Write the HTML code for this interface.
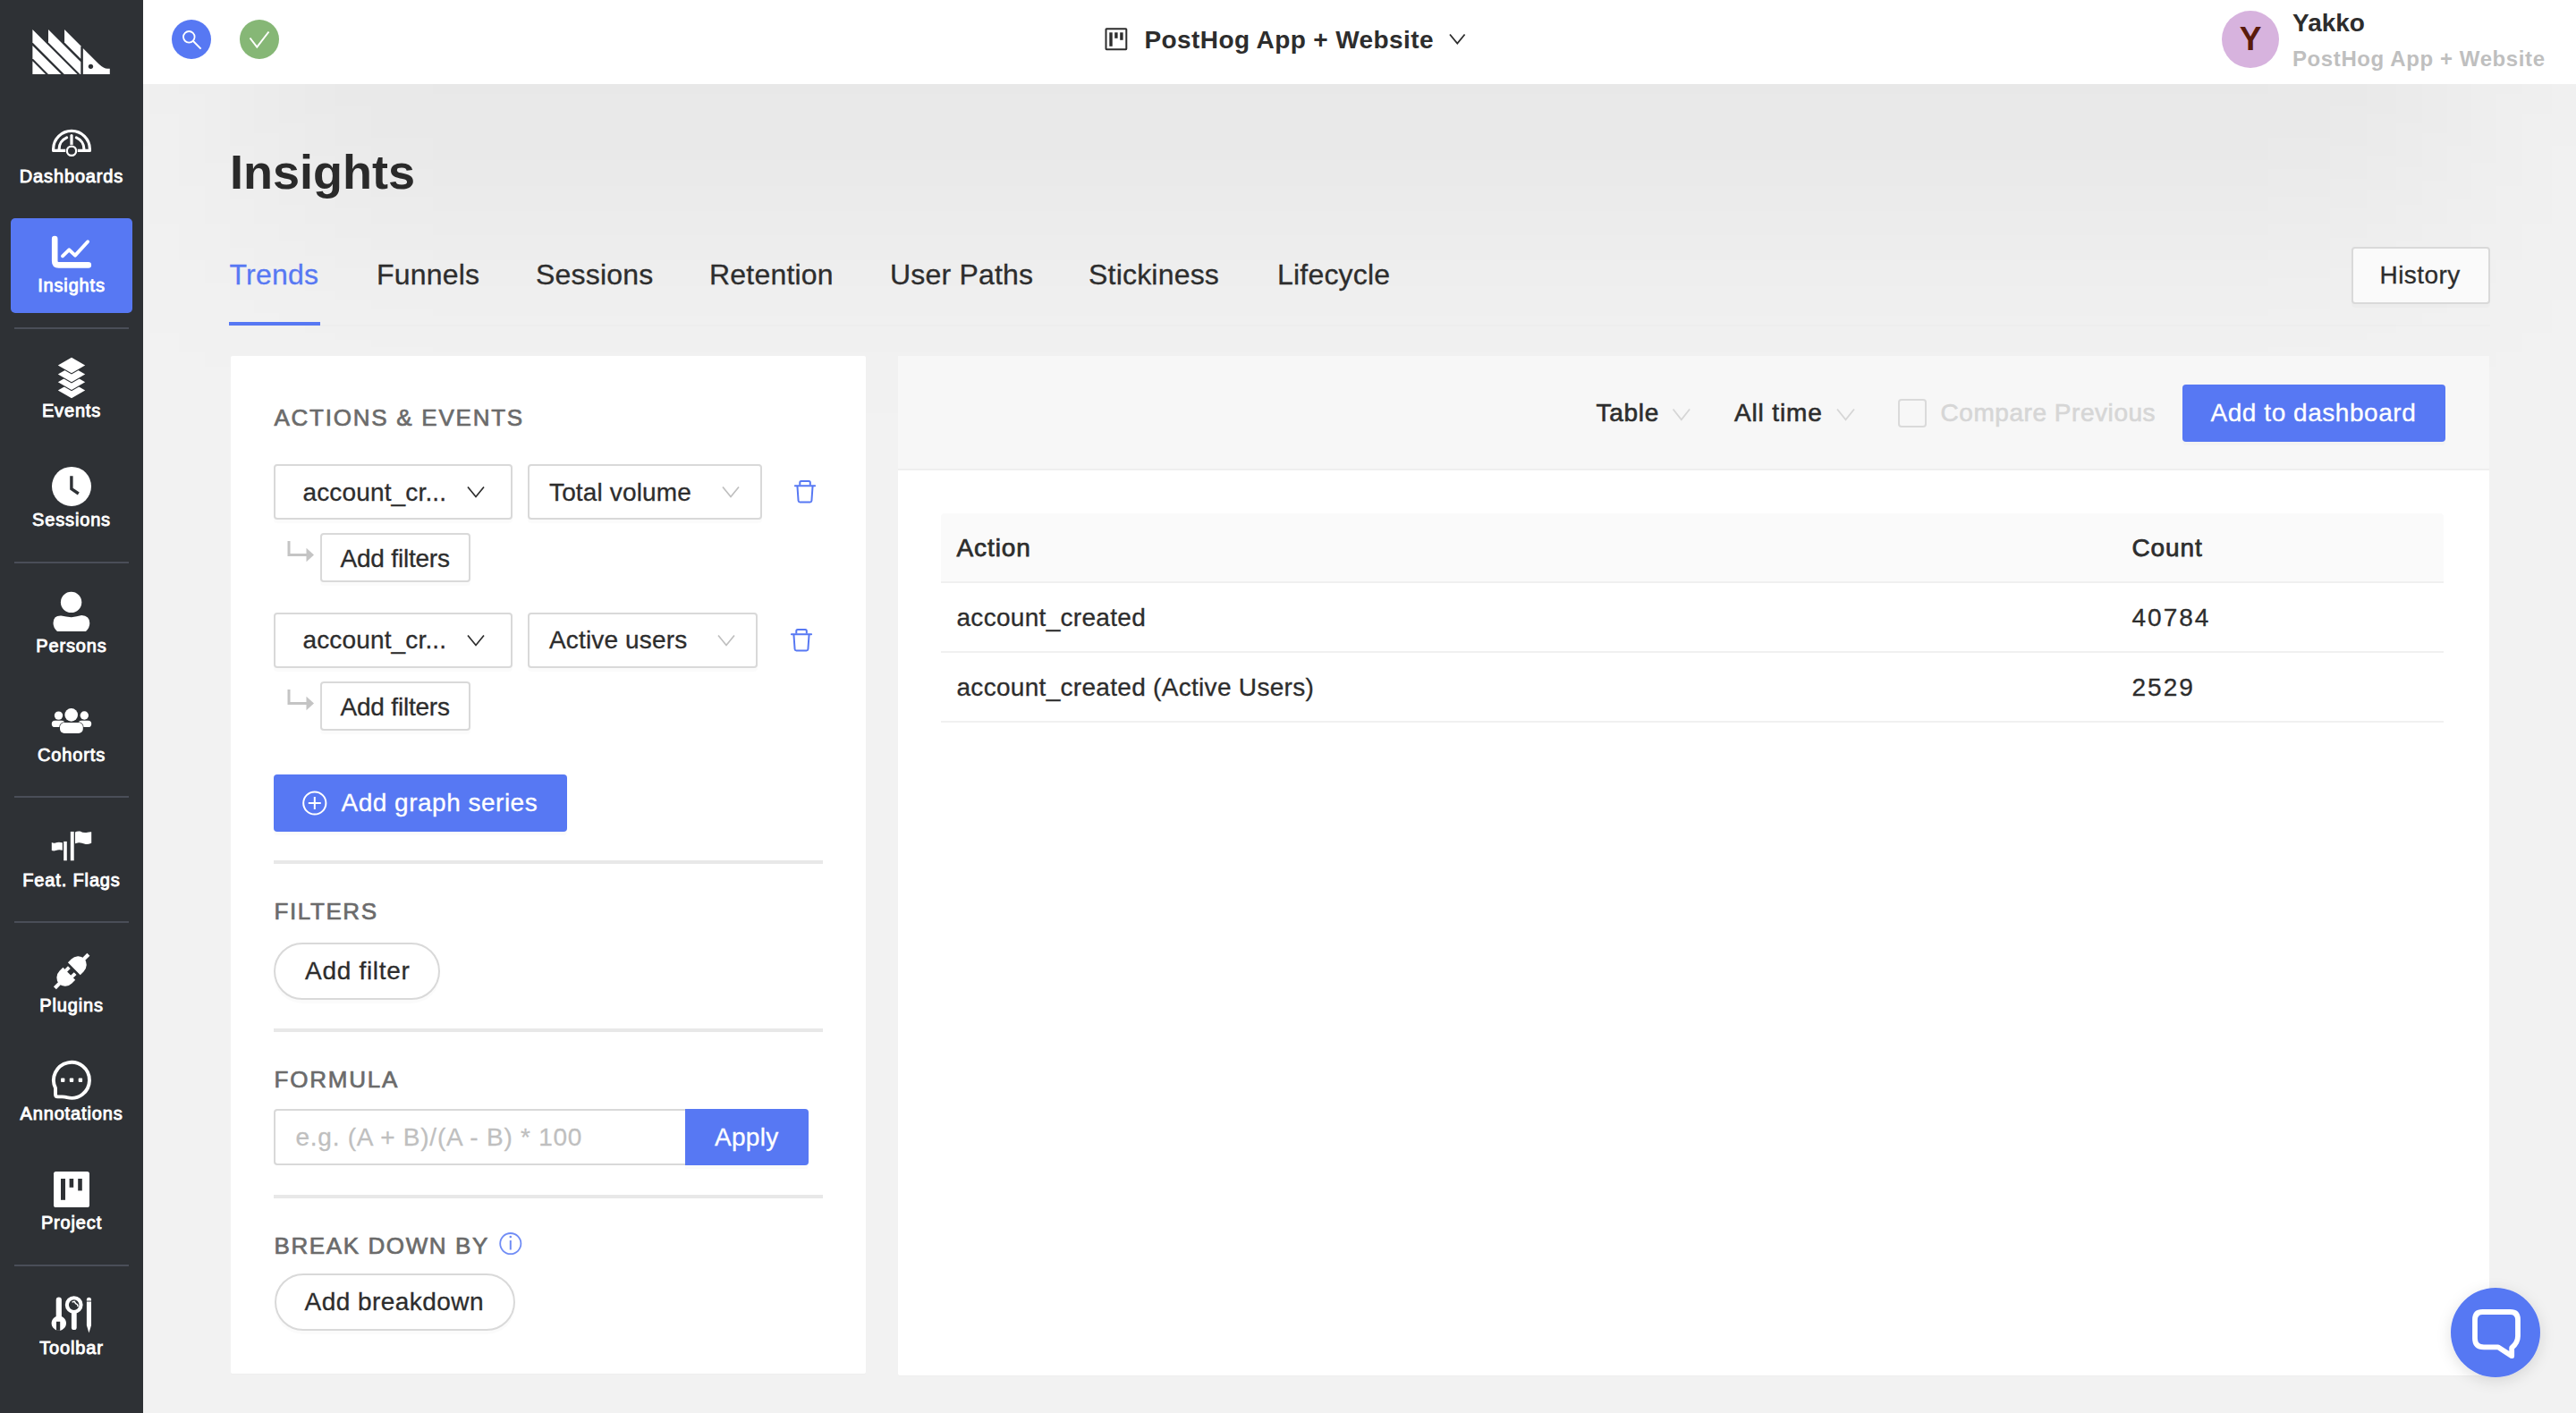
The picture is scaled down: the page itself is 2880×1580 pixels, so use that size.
<!DOCTYPE html>
<html><head><meta charset="utf-8"><title>PostHog Insights</title>
<style>
html,body{margin:0;padding:0;}
body{width:2880px;height:1580px;overflow:hidden;position:relative;background:#f2f2f2;font-family:"Liberation Sans",sans-serif;-webkit-font-smoothing:antialiased;}
.a{position:absolute;display:block;}
.t{position:absolute;line-height:1;white-space:nowrap;-webkit-text-stroke-width:0.3px;}
</style></head><body>
<div class="a" style="left:0px;top:0px;width:160px;height:1580px;background:#2e3135;"></div>
<svg class="a" style="left:160px;top:94px;width:2720px;height:620px;" viewBox="160 94 2720 620"><defs><filter id="hb" filterUnits="userSpaceOnUse" x="-400" y="-600" width="3800" height="1600"><feGaussianBlur stdDeviation="130"/></filter></defs><rect x="270" y="-300" width="2480" height="550" fill="#000" fill-opacity="0.046" filter="url(#hb)"/></svg>
<svg class="a" style="left:30px;top:28px;width:100px;height:60px;" viewBox="30 28 100 60"><polygon points="72.04,32.88 90.30,51.14 90.30,65.79 72.04,47.53" fill="#fff"/><polygon points="53.99,32.88 90.30,69.19 90.30,82.99 89.45,82.99 53.99,47.53" fill="#fff"/><polygon points="36.37,32.88 86.48,82.99 71.83,82.99 36.37,47.53" fill="#fff"/><polygon points="36.37,50.93 68.43,82.99 53.99,82.99 36.37,65.37" fill="#fff"/><polygon points="36.37,68.34 51.02,82.99 36.37,82.99" fill="#fff"/><path d="M92.85,53.90 L110.68,71.74 Q116.20,76.83 120.02,76.83 L122.78,76.83 L122.78,82.99 L92.85,82.99 Z" fill="#fff"/><circle cx="101.46" cy="74.28" r="2.63" fill="#2e3135"/></svg>
<div class="a" style="left:12px;top:244px;width:136px;height:106px;background:#5778f3;border-radius:5px;"></div>
<div class="t" style="left:-320px;width:800px;text-align:center;top:187.07px;font-size:20px;color:#fff;letter-spacing:0.85px;-webkit-text-stroke-width:0.9px;">Dashboards</div>
<div class="t" style="left:-320px;width:800px;text-align:center;top:308.67px;font-size:20px;color:#fff;letter-spacing:0.85px;-webkit-text-stroke-width:0.9px;">Insights</div>
<div class="t" style="left:-320px;width:800px;text-align:center;top:449.07px;font-size:20px;color:#fff;letter-spacing:0.85px;-webkit-text-stroke-width:0.9px;">Events</div>
<div class="t" style="left:-320px;width:800px;text-align:center;top:571.07px;font-size:20px;color:#fff;letter-spacing:0.85px;-webkit-text-stroke-width:0.9px;">Sessions</div>
<div class="t" style="left:-320px;width:800px;text-align:center;top:711.67px;font-size:20px;color:#fff;letter-spacing:0.85px;-webkit-text-stroke-width:0.9px;">Persons</div>
<div class="t" style="left:-320px;width:800px;text-align:center;top:833.87px;font-size:20px;color:#fff;letter-spacing:0.85px;-webkit-text-stroke-width:0.9px;">Cohorts</div>
<div class="t" style="left:-320px;width:800px;text-align:center;top:973.57px;font-size:20px;color:#fff;letter-spacing:0.85px;-webkit-text-stroke-width:0.9px;">Feat. Flags</div>
<div class="t" style="left:-320px;width:800px;text-align:center;top:1114.07px;font-size:20px;color:#fff;letter-spacing:0.85px;-webkit-text-stroke-width:0.9px;">Plugins</div>
<div class="t" style="left:-320px;width:800px;text-align:center;top:1235.07px;font-size:20px;color:#fff;letter-spacing:0.85px;-webkit-text-stroke-width:0.9px;">Annotations</div>
<div class="t" style="left:-320px;width:800px;text-align:center;top:1357.07px;font-size:20px;color:#fff;letter-spacing:0.85px;-webkit-text-stroke-width:0.9px;">Project</div>
<div class="t" style="left:-320px;width:800px;text-align:center;top:1497.07px;font-size:20px;color:#fff;letter-spacing:0.85px;-webkit-text-stroke-width:0.9px;">Toolbar</div>
<div class="a" style="left:16px;top:366px;width:128px;height:2px;background:#4a4e58;"></div>
<div class="a" style="left:16px;top:628px;width:128px;height:2px;background:#4a4e58;"></div>
<div class="a" style="left:16px;top:890px;width:128px;height:2px;background:#4a4e58;"></div>
<div class="a" style="left:16px;top:1030px;width:128px;height:2px;background:#4a4e58;"></div>
<div class="a" style="left:16px;top:1414px;width:128px;height:2px;background:#4a4e58;"></div>
<svg class="a" style="left:50px;top:135px;width:60px;height:50px;" viewBox="50 135 60 50">
<path d="M59.6,168.4 V166.7 A20.4,20.4 0 0 1 100.4,166.7 V168.4 Z" fill="none" stroke="#fff" stroke-width="3.2" stroke-linejoin="round"/>
<path d="M66.1,166.8 A13.9,13.9 0 0 1 74.6,153.9" fill="none" stroke="#fff" stroke-width="3.2" stroke-linecap="round"/>
<path d="M93.9,166.8 A13.9,13.9 0 0 0 85.4,153.9" fill="none" stroke="#fff" stroke-width="3.2" stroke-linecap="round"/>
<line x1="80" y1="151.5" x2="80" y2="163" stroke="#fff" stroke-width="3.2" stroke-linecap="round"/>
<circle cx="80" cy="168.8" r="7.0" fill="#2e3135"/>
<circle cx="80" cy="168.8" r="5.15" fill="none" stroke="#fff" stroke-width="2.3"/>
</svg>
<svg class="a" style="left:50px;top:255px;width:60px;height:50px;" viewBox="50 255 60 50">
<path d="M61.2,267 V292 Q61.2,296.4 65.6,296.4 H98.8" fill="none" stroke="#fff" stroke-width="6.6" stroke-linecap="round" stroke-linejoin="round"/>
<polyline points="70,286.3 77.2,279.3 84,285.6 98.1,270.2" fill="none" stroke="#fff" stroke-width="3.9" stroke-linecap="round" stroke-linejoin="round"/>
</svg>
<svg class="a" style="left:50px;top:395px;width:60px;height:55px;" viewBox="50 395 60 55"><polygon points="80,427.75 95.2,436.5 80,445.25 64.8,436.5" fill="#fff" stroke="#2e3135" stroke-width="2.2" paint-order="stroke"/><polygon points="80,418.55 95.2,427.3 80,436.05 64.8,427.3" fill="#fff" stroke="#2e3135" stroke-width="2.2" paint-order="stroke"/><polygon points="80,409.65 95.2,418.4 80,427.15 64.8,418.4" fill="#fff" stroke="#2e3135" stroke-width="2.2" paint-order="stroke"/><polygon points="80,399.65 95.2,408.4 80,417.15 64.8,408.4" fill="#fff" stroke="#2e3135" stroke-width="2.2" paint-order="stroke"/></svg>
<svg class="a" style="left:50px;top:515px;width:60px;height:60px;" viewBox="50 515 60 60">
<circle cx="80" cy="543.9" r="22" fill="#fff"/>
<polyline points="79.9,532.2 79.9,546.6 87.8,552" fill="none" stroke="#2e3135" stroke-width="3.4"/>
</svg>
<svg class="a" style="left:50px;top:655px;width:60px;height:60px;" viewBox="50 655 60 60">
<circle cx="79.6" cy="673.4" r="11.7" fill="#fff"/>
<path d="M68.5,688.5 Q74,689.5 79.8,690.2 Q86,689.5 91.2,688 Q100.3,688.5 100.3,696.8 Q100.3,702 96,706 H64 Q59.5,702 59.5,696.8 Q59.5,688 68.5,688.5 Z" fill="#fff"/>
</svg>
<svg class="a" style="left:50px;top:785px;width:60px;height:45px;" viewBox="50 785 60 45">
<circle cx="65.5" cy="800.1" r="4.7" fill="#fff"/>
<circle cx="94.3" cy="800" r="4.7" fill="#fff"/>
<rect x="57.8" y="805.7" width="14.8" height="7.4" rx="3.7" fill="#fff"/>
<rect x="87.4" y="805.7" width="14.8" height="7.4" rx="3.7" fill="#fff"/>
<circle cx="79.7" cy="799.4" r="7.3" fill="#fff" stroke="#2e3135" stroke-width="1.2" paint-order="stroke"/>
<rect x="67" y="808" width="25.8" height="12" rx="5" fill="#fff" stroke="#2e3135" stroke-width="1.4" paint-order="stroke"/>
</svg>
<svg class="a" style="left:50px;top:920px;width:60px;height:50px;" viewBox="50 920 60 50">
<path d="M57.8,942 Q60,943.2 62,942.5 Q65.5,941 69.8,942.3 V950.8 Q66,949.5 62.5,951 Q60,951.8 57.8,950.9 Z" fill="#fff"/>
<rect x="71.2" y="940.9" width="3.6" height="21.4" fill="#fff"/>
<rect x="78.8" y="929.9" width="3.9" height="32.4" fill="#fff"/>
<path d="M84,930.6 Q86,929 89.5,929.5 Q93,931.5 96.5,931 Q100,930 102.2,930.2 V942.8 Q98,944.5 95,943.8 Q91,942 88,942.2 Q85.5,942.5 84,943.2 Z" fill="#fff"/>
</svg>
<svg class="a" style="left:50px;top:1060px;width:60px;height:50px;" viewBox="50 1060 60 50">
<g transform="translate(80.07,1086) rotate(-45)">
<path d="M3.9,-9.75 H9.2 A10.6,9.75 0 0 1 9.2,9.75 H3.9 Z" fill="#fff"/>
<rect x="17" y="-2.1" width="9.6" height="4.2" fill="#fff"/>
<path d="M-3.9,-9.75 H-9.2 A10.6,9.75 0 0 0 -9.2,9.75 H-3.9 Z" fill="#fff"/>
<rect x="-26.4" y="-2.1" width="9.6" height="4.2" fill="#fff"/>
<rect x="-4.5" y="-6.9" width="5.6" height="3.9" fill="#fff"/>
<rect x="-4.5" y="2.7" width="5.6" height="3.9" fill="#fff"/>
</g></svg>
<svg class="a" style="left:50px;top:1180px;width:60px;height:55px;" viewBox="50 1180 60 55">
<path d="M62,1216.6 A20,20 0 1 1 75,1227.2 Q72.5,1226.4 69.5,1226.4 H64.6 Q62,1226.4 62,1223.8 Z" fill="none" stroke="#fff" stroke-width="3.9" stroke-linejoin="round"/>
<rect x="68" y="1205.6" width="4.4" height="4.4" rx="1" fill="#fff"/>
<rect x="77.8" y="1205.6" width="4.4" height="4.4" rx="1" fill="#fff"/>
<rect x="87.7" y="1205.6" width="4.4" height="4.4" rx="1" fill="#fff"/>
</svg>
<svg class="a" style="left:50px;top:1300px;width:60px;height:60px;" viewBox="50 1300 60 60">
<rect x="60" y="1310" width="40" height="40" rx="2.6" fill="#fff"/>
<rect x="68" y="1318" width="5" height="23.8" fill="#2e3135"/>
<rect x="77.6" y="1318" width="4.6" height="9.8" fill="#2e3135"/>
<rect x="87.2" y="1318" width="4.6" height="13.4" fill="#2e3135"/>
</svg>
<svg class="a" style="left:50px;top:1440px;width:60px;height:60px;" viewBox="50 1440 60 60">
<path d="M65.8,1450.4 A3.1,3.1 0 0 1 68.9,1453.5 V1472 A8.2,8.2 0 1 1 62.7,1472 V1453.5 A3.1,3.1 0 0 1 65.8,1450.4 Z" fill="#fff"/>
<rect x="63" y="1477.8" width="4.2" height="10" fill="#2e3135"/>
<circle cx="82.7" cy="1459.1" r="7.85" fill="none" stroke="#fff" stroke-width="4.1"/>
<path d="M79.9,1466 H85.7 V1484.2 A2.9,2.9 0 0 1 79.9,1484.2 Z" fill="#fff"/>
<polyline points="80.6,1455.9 83.3,1455.3 84.6,1457.6 86.5,1458.6 87.2,1461" fill="none" stroke="#fff" stroke-width="1.5" stroke-linejoin="round"/>
<path d="M96.9,1453.3 A2.55,2.55 0 0 1 102,1453.3 V1454.6 H96.9 Z" fill="#fff"/>
<path d="M96.9,1455.6 H102 V1482 L99.45,1490.5 L96.9,1482 Z" fill="#fff"/>
</svg>
<div class="a" style="left:160px;top:0px;width:2720px;height:94px;background:#fff;z-index:2;"></div>
<svg class="a" style="left:190px;top:20px;width:48px;height:48px;z-index:3;" viewBox="190 20 48 48"><circle cx="214" cy="44" r="22" fill="#5778f3"/>
<circle cx="211.3" cy="41.3" r="6.3" fill="none" stroke="#fff" stroke-width="1.8"/>
<line x1="215.8" y1="45.8" x2="224.6" y2="54.6" stroke="#fff" stroke-width="2"/></svg>
<svg class="a" style="left:266px;top:20px;width:48px;height:48px;z-index:3;" viewBox="266 20 48 48"><circle cx="290" cy="44" r="22" fill="#86b776"/>
<polyline points="279.5,42.5 287.3,52.5 300.5,35.5" fill="none" stroke="#fff" stroke-width="2"/></svg>
<svg class="a" style="left:1232px;top:28px;width:32px;height:32px;z-index:3;" viewBox="1232 28 32 32"><rect x="1236.5" y="32.2" width="22.8" height="23" rx="0.6" fill="none" stroke="#2d2d2d" stroke-width="2"/>
<rect x="1240.3" y="36.3" width="3.4" height="15.5" fill="#2d2d2d"/>
<rect x="1246.2" y="36.3" width="3.4" height="6.5" fill="#2d2d2d"/>
<rect x="1252.2" y="36.3" width="3.4" height="8.5" fill="#2d2d2d"/></svg>
<div class="t" style="left:1279.5px;top:30.60px;font-size:28px;color:#2d2d2d;font-weight:700;-webkit-text-stroke-width:0;letter-spacing:0.4px;z-index:3;">PostHog App + Website</div>
<svg class="a" style="left:1616px;top:34px;width:26px;height:20px;z-index:3;" viewBox="1616 34 26 20"><polyline points="1621,38.5 1629.3,48.5 1637.6,38.5" fill="none" stroke="#2d2d2d" stroke-width="1.8"/></svg>
<svg class="a" style="left:2482px;top:10px;width:68px;height:68px;z-index:3;" viewBox="2482 10 68 68"><circle cx="2516" cy="44" r="32" fill="#d7b3de"/></svg>
<div class="t" style="left:2116px;width:800px;text-align:center;top:24.68px;font-size:37px;color:#5a1b0c;font-weight:700;-webkit-text-stroke-width:0;z-index:3;">Y</div>
<div class="t" style="left:2563px;top:12.10px;font-size:28px;color:#2d2d2d;font-weight:700;-webkit-text-stroke-width:0;z-index:3;">Yakko</div>
<div class="t" style="left:2563px;top:53.68px;font-size:24px;color:#bfbfbf;font-weight:700;-webkit-text-stroke-width:0;letter-spacing:0.6px;z-index:3;">PostHog App + Website</div>
<div class="t" style="left:257px;top:164.69px;font-size:54px;color:#2a2a2a;font-weight:700;-webkit-text-stroke-width:0;">Insights</div>
<div class="t" style="left:256.5px;top:290.91px;font-size:32px;color:#5778f3;letter-spacing:0.2px;">Trends</div>
<div class="t" style="left:421px;top:290.91px;font-size:32px;color:#2d2d2d;letter-spacing:0.2px;">Funnels</div>
<div class="t" style="left:599px;top:290.91px;font-size:32px;color:#2d2d2d;letter-spacing:0.2px;">Sessions</div>
<div class="t" style="left:793px;top:290.91px;font-size:32px;color:#2d2d2d;letter-spacing:0.2px;">Retention</div>
<div class="t" style="left:995px;top:290.91px;font-size:32px;color:#2d2d2d;letter-spacing:0.2px;">User Paths</div>
<div class="t" style="left:1217px;top:290.91px;font-size:32px;color:#2d2d2d;letter-spacing:0.2px;">Stickiness</div>
<div class="t" style="left:1428px;top:290.91px;font-size:32px;color:#2d2d2d;letter-spacing:0.2px;">Lifecycle</div>
<div class="a" style="left:256px;top:363px;width:2528px;height:2px;background:rgba(0,0,0,0.01);"></div>
<div class="a" style="left:256px;top:360px;width:102px;height:4px;background:#5778f3;"></div>
<div class="a" style="left:2629px;top:276px;width:155px;height:64px;background:#fafafa;border:2px solid #d9d9d9;border-radius:4px;box-sizing:border-box;box-shadow:0 4px 0 rgba(0,0,0,0.015);"></div>
<div class="t" style="left:2660.5px;top:294.30px;font-size:28px;color:#2d2d2d;letter-spacing:0.45px;">History</div>
<div class="a" style="left:258px;top:398px;width:710px;height:1138px;background:#fff;border-radius:2px;box-shadow:0 1px 1px rgba(0,0,0,0.02);"></div>
<div class="t" style="left:306.5px;top:453.99px;font-size:26px;color:#6b6b6b;letter-spacing:1.75px;-webkit-text-stroke:0.7px #6b6b6b;">ACTIONS &amp; EVENTS</div>
<div class="a" style="left:306px;top:519px;width:267px;height:62px;background:#fff;border:2px solid #d9d9d9;border-radius:4px;box-sizing:border-box;box-shadow:0 4px 0 rgba(0,0,0,0.016);"></div>
<div class="t" style="left:338.5px;top:536.60px;font-size:28px;color:#2d2d2d;letter-spacing:0.15px;">account_cr...</div>
<svg class="a" style="left:521px;top:540px;width:24px;height:20px;" viewBox="521 540 24 20"><polyline points="523,544.5 532,555.5 541,544.5" fill="none" stroke="#2d2d2d" stroke-width="1.7"/></svg>
<div class="a" style="left:590px;top:519px;width:262px;height:62px;background:#fff;border:2px solid #d9d9d9;border-radius:4px;box-sizing:border-box;box-shadow:0 4px 0 rgba(0,0,0,0.016);"></div>
<div class="t" style="left:614px;top:536.60px;font-size:28px;color:#2d2d2d;letter-spacing:0.15px;">Total volume</div>
<svg class="a" style="left:806px;top:540px;width:24px;height:20px;" viewBox="806 540 24 20"><polyline points="808,544.5 817,555.5 826,544.5" fill="none" stroke="#bfbfbf" stroke-width="1.7"/></svg>
<svg class="a" style="left:886px;top:534.5px;width:28px;height:30.0px;" viewBox="886 534.5 28 30.0"><path d="M894.3,542.1 V539.1 Q894.3,537.6 895.8,537.6 H904.3 Q905.8,537.6 905.8,539.1 V542.1" fill="none" stroke="#5778f3" stroke-width="2"/>
<line x1="888.9" y1="542.7" x2="911.1" y2="542.7" stroke="#5778f3" stroke-width="2" stroke-linecap="round"/>
<path d="M891.4,542.5 L892.6,559.5 Q892.8,561.1 894.4,561.1 H905.6 Q907.2,561.1 907.4,559.5 L908.6,542.5" fill="none" stroke="#5778f3" stroke-width="2"/></svg>
<div class="a" style="left:358px;top:596px;width:168px;height:55px;background:#fff;border:2px solid #d9d9d9;border-radius:4px;box-sizing:border-box;box-shadow:0 4px 0 rgba(0,0,0,0.016);"></div>
<div class="t" style="left:380.5px;top:610.90px;font-size:28px;color:#2d2d2d;letter-spacing:-0.2px;">Add filters</div>
<svg class="a" style="left:318px;top:602px;width:36px;height:30px;" viewBox="318 602 36 30"><polyline points="323,605 323,620.5 343,620.5" fill="none" stroke="#c4c4c4" stroke-width="3"/>
<polygon points="342.5,612.8 351,620.5 342.5,628.2" fill="#c4c4c4"/></svg>
<div class="a" style="left:306px;top:684.5px;width:267px;height:62.0px;background:#fff;border:2px solid #d9d9d9;border-radius:4px;box-sizing:border-box;box-shadow:0 4px 0 rgba(0,0,0,0.016);"></div>
<div class="t" style="left:338.5px;top:702.10px;font-size:28px;color:#2d2d2d;letter-spacing:0.15px;">account_cr...</div>
<svg class="a" style="left:521px;top:705.5px;width:24px;height:20.0px;" viewBox="521 705.5 24 20.0"><polyline points="523,710.0 532,721.0 541,710.0" fill="none" stroke="#2d2d2d" stroke-width="1.7"/></svg>
<div class="a" style="left:590px;top:684.5px;width:257px;height:62.0px;background:#fff;border:2px solid #d9d9d9;border-radius:4px;box-sizing:border-box;box-shadow:0 4px 0 rgba(0,0,0,0.016);"></div>
<div class="t" style="left:614px;top:702.10px;font-size:28px;color:#2d2d2d;letter-spacing:0.15px;">Active users</div>
<svg class="a" style="left:801px;top:705.5px;width:24px;height:20.0px;" viewBox="801 705.5 24 20.0"><polyline points="803,710.0 812,721.0 821,710.0" fill="none" stroke="#bfbfbf" stroke-width="1.7"/></svg>
<svg class="a" style="left:882px;top:700.7px;width:28px;height:30.0px;" viewBox="882 700.7 28 30.0"><path d="M890.3,708.3000000000001 V705.3000000000001 Q890.3,703.8000000000001 891.8,703.8000000000001 H900.3 Q901.8,703.8000000000001 901.8,705.3000000000001 V708.3000000000001" fill="none" stroke="#5778f3" stroke-width="2"/>
<line x1="884.9" y1="708.9000000000001" x2="907.1" y2="708.9000000000001" stroke="#5778f3" stroke-width="2" stroke-linecap="round"/>
<path d="M887.4,708.7 L888.6,725.7 Q888.8,727.3000000000001 890.4,727.3000000000001 H901.6 Q903.2,727.3000000000001 903.4,725.7 L904.6,708.7" fill="none" stroke="#5778f3" stroke-width="2"/></svg>
<div class="a" style="left:358px;top:762px;width:168px;height:55px;background:#fff;border:2px solid #d9d9d9;border-radius:4px;box-sizing:border-box;box-shadow:0 4px 0 rgba(0,0,0,0.016);"></div>
<div class="t" style="left:380.5px;top:776.90px;font-size:28px;color:#2d2d2d;letter-spacing:-0.2px;">Add filters</div>
<svg class="a" style="left:318px;top:768px;width:36px;height:30px;" viewBox="318 768 36 30"><polyline points="323,771 323,786.5 343,786.5" fill="none" stroke="#c4c4c4" stroke-width="3"/>
<polygon points="342.5,778.8 351,786.5 342.5,794.2" fill="#c4c4c4"/></svg>
<div class="a" style="left:306px;top:866px;width:328px;height:64px;background:#5778f3;border-radius:4px;box-shadow:0 4px 0 rgba(0,0,0,0.016);"></div>
<svg class="a" style="left:334px;top:880px;width:36px;height:36px;" viewBox="334 880 36 36"><circle cx="351.8" cy="898" r="12.6" fill="none" stroke="#fff" stroke-width="2"/>
<line x1="351.8" y1="891" x2="351.8" y2="905" stroke="#fff" stroke-width="2"/><line x1="344.8" y1="898" x2="358.8" y2="898" stroke="#fff" stroke-width="2"/></svg>
<div class="t" style="left:381.5px;top:884.30px;font-size:28px;color:#fff;letter-spacing:0.5px;">Add graph series</div>
<div class="a" style="left:306px;top:962px;width:614px;height:4px;background:#e8e8e8;"></div>
<div class="t" style="left:306.5px;top:1005.99px;font-size:26px;color:#6b6b6b;letter-spacing:1.6px;-webkit-text-stroke:0.7px #6b6b6b;">FILTERS</div>
<div class="a" style="left:306px;top:1054px;width:186px;height:64px;background:#fff;border:2px solid #d9d9d9;border-radius:32px;box-sizing:border-box;box-shadow:0 4px 0 rgba(0,0,0,0.016);"></div>
<div class="t" style="left:341px;top:1072.30px;font-size:28px;color:#2d2d2d;letter-spacing:0.7px;">Add filter</div>
<div class="a" style="left:306px;top:1150px;width:614px;height:4px;background:#e8e8e8;"></div>
<div class="t" style="left:306.5px;top:1193.99px;font-size:26px;color:#6b6b6b;letter-spacing:1.8px;-webkit-text-stroke:0.7px #6b6b6b;">FORMULA</div>
<div class="a" style="left:306px;top:1240px;width:464px;height:63px;background:#fff;border:2px solid #d9d9d9;border-right:none;border-radius:4px 0 0 4px;box-sizing:border-box;"></div>
<div class="t" style="left:330.5px;top:1257.80px;font-size:28px;color:#bfbfbf;letter-spacing:0.75px;">e.g. (A + B)/(A - B) * 100</div>
<div class="a" style="left:766px;top:1240px;width:138px;height:63px;background:#5778f3;border-radius:0 4px 4px 0;box-shadow:0 4px 0 rgba(0,0,0,0.016);"></div>
<div class="t" style="left:799px;top:1257.80px;font-size:28px;color:#fff;letter-spacing:0.3px;">Apply</div>
<div class="a" style="left:306px;top:1336px;width:614px;height:4px;background:#e8e8e8;"></div>
<div class="t" style="left:306.5px;top:1379.99px;font-size:26px;color:#6b6b6b;letter-spacing:1.6px;-webkit-text-stroke:0.7px #6b6b6b;">BREAK DOWN BY</div>
<svg class="a" style="left:556px;top:1376px;width:30px;height:30px;" viewBox="556 1376 30 30"><circle cx="570.8" cy="1390.6" r="11.6" fill="none" stroke="#5778f3" stroke-width="1.8" opacity="0.85"/>
<line x1="570.8" y1="1387" x2="570.8" y2="1397.5" stroke="#5778f3" stroke-width="2" opacity="0.85"/><circle cx="570.8" cy="1383" r="1.3" fill="#5778f3" opacity="0.85"/></svg>
<div class="a" style="left:306.5px;top:1424px;width:269.5px;height:64px;background:#fff;border:2px solid #d9d9d9;border-radius:32px;box-sizing:border-box;box-shadow:0 4px 0 rgba(0,0,0,0.016);"></div>
<div class="t" style="left:340.5px;top:1442.30px;font-size:28px;color:#2d2d2d;letter-spacing:0.45px;">Add breakdown</div>
<div class="a" style="left:1004px;top:398px;width:1779px;height:1140px;background:#fff;border-radius:2px;box-shadow:0 1px 1px rgba(0,0,0,0.02);"></div>
<div class="a" style="left:1004px;top:398px;width:1779px;height:128px;background:#f7f7f7;border-bottom:2px solid #efefef;box-sizing:border-box;border-radius:1px 1px 0 0;"></div>
<div class="t" style="left:1784.5px;top:448.30px;font-size:28px;color:#2d2d2d;letter-spacing:0.7px;-webkit-text-stroke-width:0.6px;">Table</div>
<svg class="a" style="left:1866px;top:452px;width:28px;height:22px;" viewBox="1866 452 28 22"><polyline points="1870.5,457.5 1879.8,469.3 1889.1,457.5" fill="none" stroke="#d6d6d6" stroke-width="1.8"/></svg>
<div class="t" style="left:1939px;top:448.30px;font-size:28px;color:#2d2d2d;letter-spacing:0.85px;-webkit-text-stroke-width:0.6px;">All time</div>
<svg class="a" style="left:2050px;top:452px;width:28px;height:22px;" viewBox="2050 452 28 22"><polyline points="2054,457.5 2063.5,469.3 2073,457.5" fill="none" stroke="#d6d6d6" stroke-width="1.8"/></svg>
<div class="a" style="left:2122px;top:446px;width:32px;height:32px;background:transparent;border:2px solid #dadada;border-radius:4px;box-sizing:border-box;"></div>
<div class="t" style="left:2169.5px;top:448.30px;font-size:28px;color:#d6d6d6;letter-spacing:0.55px;-webkit-text-stroke-width:0.6px;">Compare Previous</div>
<div class="a" style="left:2440px;top:430px;width:294px;height:64px;background:#5778f3;border-radius:4px;box-shadow:0 4px 0 rgba(0,0,0,0.016);"></div>
<div class="t" style="left:2471.5px;top:448.30px;font-size:28px;color:#fff;letter-spacing:0.55px;">Add to dashboard</div>
<div class="a" style="left:1052px;top:574px;width:1680px;height:76px;background:#fafafa;border-radius:4px 4px 0 0;"></div>
<div class="a" style="left:1052px;top:650px;width:1680px;height:2px;background:#f0f0f0;"></div>
<div class="a" style="left:1052px;top:728px;width:1680px;height:2px;background:#f0f0f0;"></div>
<div class="a" style="left:1052px;top:806px;width:1680px;height:2px;background:#f0f0f0;"></div>
<div class="t" style="left:1069.5px;top:598.70px;font-size:28px;color:#2d2d2d;letter-spacing:0.9px;-webkit-text-stroke:0.75px #2d2d2d;">Action</div>
<div class="t" style="left:2383.5px;top:598.70px;font-size:28px;color:#2d2d2d;letter-spacing:0.9px;-webkit-text-stroke:0.75px #2d2d2d;">Count</div>
<div class="t" style="left:1069.5px;top:677.10px;font-size:28px;color:#2d2d2d;letter-spacing:0.3px;">account_created</div>
<div class="t" style="left:2383.5px;top:677.10px;font-size:28px;color:#2d2d2d;letter-spacing:2.0px;">40784</div>
<div class="t" style="left:1069.5px;top:755.30px;font-size:28px;color:#2d2d2d;letter-spacing:0.3px;">account_created (Active Users)</div>
<div class="t" style="left:2383.5px;top:755.30px;font-size:28px;color:#2d2d2d;letter-spacing:2.0px;">2529</div>
<svg class="a" style="left:2720px;top:1420px;width:140px;height:140px;" viewBox="2720 1420 140 140"><defs><filter id="sh" x="-50%" y="-50%" width="200%" height="200%"><feDropShadow dx="0" dy="4" stdDeviation="8" flood-color="#000" flood-opacity="0.12"/></filter></defs>
<circle cx="2790" cy="1490" r="50" fill="#5778f3" filter="url(#sh)"/>
<path d="M2775.5,1467 H2806.5 Q2815,1467 2815,1475.5 V1494 Q2815,1501.5 2808.2,1507 V1516.2 L2793,1506.4 H2777 Q2767,1506.4 2767,1496.5 V1475.5 Q2767,1467 2775.5,1467 Z" fill="none" stroke="#fff" stroke-width="5.8" stroke-linejoin="round"/></svg>

</body></html>
